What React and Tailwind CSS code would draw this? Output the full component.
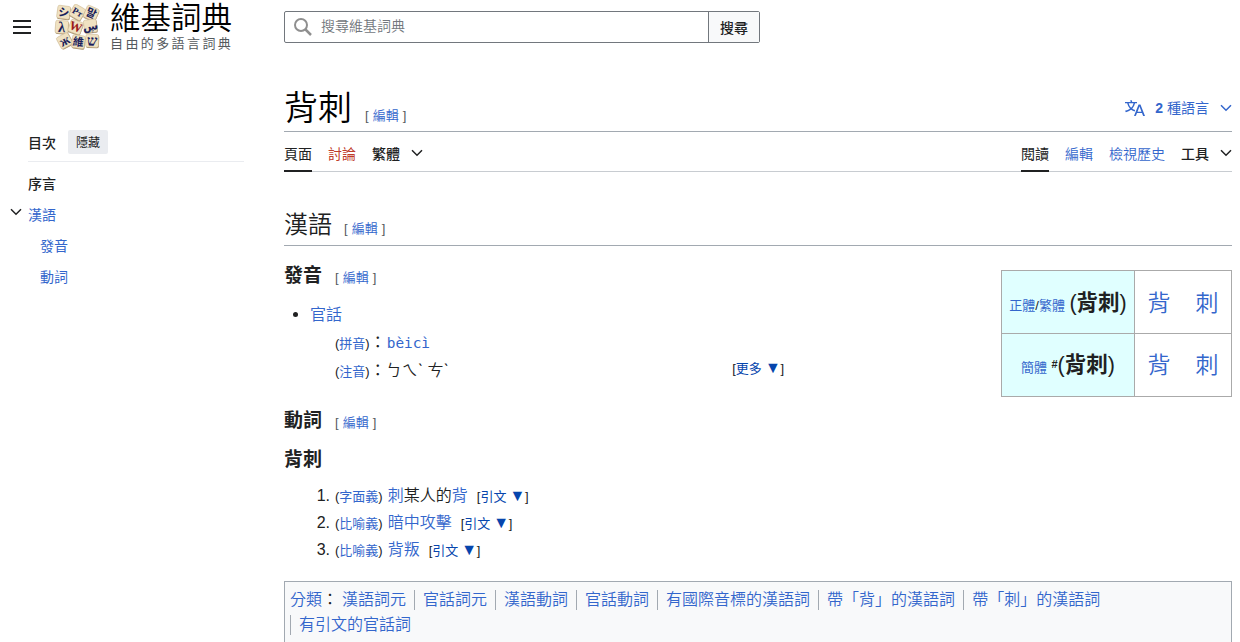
const tiles = [
  { x: 11, y: 9, r: 8, t: "シ", s: 12 },
  { x: 26, y: 9, r: 30, t: "Рт", s: 10 },
  { x: 41, y: 10, r: 24, t: "말", s: 12 },
  { x: 9, y: 25, r: 4, t: "λ", s: 16 },
  { x: 24, y: 25, r: 20, t: "W", s: 14, red: true },
  { x: 40, y: 24, r: -6, t: "ڛ", s: 12 },
  { x: 12, y: 40, r: -28, t: "ж", s: 15 },
  { x: 27, y: 41, r: 8, t: "維", s: 12 },
  { x: 42, y: 40, r: 2, t: "ש", s: 16 },
];

const categories = [
  "漢語詞元",
  "官話詞元",
  "漢語動詞",
  "官話動詞",
  "有國際音標的漢語詞",
  "帶「背」的漢語詞",
  "帶「刺」的漢語詞",
  "有引文的官話詞",
];

function Link({ children, className = "" }) {
  return (
    <a href="#" className={`text-[#3366cc] ${className}`}>
      {children}
    </a>
  );
}

function Chevron({ className = "" }) {
  return (
    <svg viewBox="0 0 12 8" className={`h-2 w-3 shrink-0 ${className}`} fill="none" stroke="currentColor" strokeWidth="1.5">
      <path d="M1 1.2l5 5 5-5" />
    </svg>
  );
}

function Logo() {
  return (
    <svg viewBox="0 0 51 50" className="mt-px h-[46px] w-[50px] shrink-0">
      {tiles.map((tile) => (
        <g key={tile.t} transform={`translate(${tile.x} ${tile.y}) rotate(${tile.r})`}>
          <rect x="-6.5" y="-6" width="14" height="14" rx="2" fill="#a58f6c" />
          <rect x="-7" y="-7" width="14" height="14" rx="2" fill="#f0e2c2" stroke="#cbb68f" strokeWidth="0.6" />
          <text
            y="0"
            fontSize={tile.s}
            fontWeight="700"
            textAnchor="middle"
            dominantBaseline="central"
            fill={tile.red ? "#9c1c1c" : "#1b1f5c"}
            className="font-['Liberation_Serif','DejaVu_Sans','Noto_Sans_CJK_TC',serif]"
          >
            {tile.t}
          </text>
        </g>
      ))}
    </svg>
  );
}

function Edit({ className = "" }) {
  return (
    <span className={`text-[13px] font-[350] text-[#54595d] ${className}`}>
      [<Link className="mx-1">編輯</Link>]
    </span>
  );
}

function Toggle({ label, className = "" }) {
  return (
    <span className={`flex items-baseline text-[13px] text-[#202122] ${className}`}>
      [
      <a href="#" className="flex items-baseline text-[#0645ad]">
        {label}
        <span className="ml-[3px] w-[15.5px] text-[16px]">▼</span>
      </a>
      ]
    </span>
  );
}

function Header() {
  return (
    <header className="flex h-[60px] items-start">
      <button className="ml-[13px] mt-5 flex h-[14px] w-[18px] flex-col justify-between">
        <span className="h-0.5 w-full bg-[#202122]" />
        <span className="h-0.5 w-full bg-[#202122]" />
        <span className="h-0.5 w-full bg-[#202122]" />
      </button>
      <a href="#" className="ml-[21px] mt-[3px] flex w-[232px]">
        <Logo />
        <span className="ml-2 flex flex-col">
          <span className="h-[31px] text-[30.5px] leading-[30px] font-[350] text-black">維基詞典</span>
          <span className="text-[13px] leading-[19px] tracking-[2.4px] text-[#54595d]">自由的多語言詞典</span>
        </span>
      </a>
      <form className="mt-[11px] flex h-8 w-[476px] rounded-[2px] border border-[#72777d]">
        <div className="flex flex-1 items-center pl-2">
          <svg viewBox="0 0 20 20" className="h-5 w-5" fill="none" stroke="#8f8f8f" strokeWidth="2">
            <circle cx="8" cy="8" r="6" />
            <path d="M12.5 12.5l5.5 5.5" strokeWidth="2.5" />
          </svg>
          <span className="ml-2 pb-0.5 text-[14px] font-[350] text-[#72777d]">搜尋維基詞典</span>
        </div>
        <button type="button" className="w-[51px] border-l border-[#72777d] bg-[#f8f9fa] pt-0.5 text-[14px] font-medium text-[#202122]">
          搜尋
        </button>
      </form>
    </header>
  );
}

function Sidebar() {
  return (
    <aside className="w-[284px] shrink-0 pt-[64px] text-[14px]">
      <div className="ml-7 flex h-[38px] w-[216px] items-center border-b border-[#eaecf0]">
        <span className="pt-px font-medium">目次</span>
        <button className="-mt-px ml-3 h-6 w-10 rounded-[2px] bg-[#eaecf0] pt-px text-[12px]">隱藏</button>
      </div>
      <ul className="mt-[7px] leading-[31px]">
        <li className="pl-7 font-medium">序言</li>
        <li className="flex items-center pl-[10px]">
          <Chevron className="mr-[6px] mb-2" />
          <Link>漢語</Link>
        </li>
        <li className="pl-10">
          <Link>發音</Link>
        </li>
        <li className="pl-10">
          <Link>動詞</Link>
        </li>
      </ul>
    </aside>
  );
}

function Tabs() {
  return (
    <nav className="flex h-10 border-b border-[#c8ccd1] text-[14px]">
      <a href="#" className="-mb-px flex items-center border-b-2 border-[#202122] pt-1.5">頁面</a>
      <a href="#" className="ml-4 flex items-center pt-[5px] text-[#bf3c2c]">討論</a>
      <button className="ml-4 flex items-center pt-[5px] font-medium">
        繁體
        <Chevron className="mb-0.5 ml-[11px]" />
      </button>
      <a href="#" className="-mb-px ml-auto flex items-center border-b-2 border-[#202122] pt-1.5">閱讀</a>
      <Link className="ml-4 flex items-center pt-[5px] font-[350]">編輯</Link>
      <Link className="ml-4 flex items-center pt-[5px] font-[350]">檢視歷史</Link>
      <button className="ml-4 flex items-center pt-[5px] font-medium">
        工具
        <Chevron className="mb-0.5 ml-[11px]" />
      </button>
    </nav>
  );
}

function FormsTable() {
  return (
    <table className="mt-6 h-[127px] w-[231px] table-fixed border-collapse text-center whitespace-nowrap">
      <tbody>
        <tr className="h-[63px]">
          <th className="w-[133px] border border-[#aaaaaa] bg-[#e0ffff] p-0 pt-0.5 font-normal">
            <span className="text-[13px]"><Link>正體</Link>/<Link>繁體</Link></span>{" "}
            <span className="text-[21.5px]">(<b>背刺</b>)</span>
          </th>
          <td className="border border-[#aaaaaa] p-0 pt-0.5 text-[23px] font-[350]">
            <Link>背</Link>
            <Link className="ml-[25px]">刺</Link>
          </td>
        </tr>
        <tr className="h-[63px]">
          <th className="border border-[#aaaaaa] bg-[#e0ffff] p-0 font-normal">
            <span className="text-[13px]"><Link>簡體</Link></span>{" "}
            <span className="relative -top-1 text-[11px] font-bold">#</span>
            <span className="text-[21.5px]">(<b>背刺</b>)</span>
          </th>
          <td className="border border-[#aaaaaa] p-0 text-[23px] font-[350]">
            <Link>背</Link>
            <Link className="ml-[25px]">刺</Link>
          </td>
        </tr>
      </tbody>
    </table>
  );
}

function Definition({ number, label, children }) {
  return (
    <li className="flex h-[27px] items-baseline leading-[27px]">
      <span className="w-[46px] text-right">{number}.</span>
      <span className="ml-[5px] text-[13px]">(<Link>{label}</Link>)</span>
      <span className="ml-[5px] font-[350]">{children}</span>
      <Toggle label="引文" className="ml-[9px]" />
    </li>
  );
}

export default function App() {
  return (
    <div className="h-[642px] w-[1240px] overflow-hidden bg-white font-['Liberation_Sans','Noto_Sans_CJK_TC',sans-serif] text-[#202122]">
      <Header />
      <div className="flex">
        <Sidebar />
        <main className="w-[948px]">
          <div className="flex h-[72px] items-center border-b border-[#a2a9b1] pt-[26px]">
            <h1 className="flex items-baseline text-[34px] font-[350] text-black">
              背刺
              <Edit className="ml-[13px]" />
            </h1>
            <button className="ml-auto flex items-center pb-px text-[14px] text-[#3366cc]">
              <svg viewBox="0 0 20 20" className="h-5 w-5" fill="currentColor">
                <path d="M20 18h-1.44a.6.6 0 0 1-.4-.12.8.8 0 0 1-.23-.31L17 15h-5l-1 2.54a.8.8 0 0 1-.22.3.6.6 0 0 1-.4.14H9l4.55-11.47h1.89zm-3.53-4.31L14.89 9.5a12 12 0 0 1-.39-1.24q-.09.37-.19.69l-.19.56-1.58 4.19zm-6.3-1.58a13.4 13.4 0 0 1-2.91-1.41 11.46 11.46 0 0 0 2.81-5.37H12V4H7.31a4 4 0 0 0-.2-.56C6.87 2.79 6.6 2 6.6 2l-1.47.5s.4.89.6 1.5H0v1.33h2.15A11.23 11.23 0 0 0 5 10.7a17.2 17.2 0 0 1-5 2.1q.56.82.87 1.38a23.3 23.3 0 0 0 5.22-2.51 15.6 15.6 0 0 0 3.56 1.77zM3.63 5.33h4.91a8.1 8.1 0 0 1-2.45 4.45 9.1 9.1 0 0 1-2.46-4.45" />
              </svg>
              <span className="ml-[10px]"><b>2</b> 種語言</span>
              <Chevron className="ml-[11px]" />
            </button>
          </div>
          <Tabs />
          <h2 className="flex h-[74px] items-center border-b border-[#a2a9b1] pt-8">
            <span className="flex items-baseline text-[24px] font-[350]">
              漢語
              <Edit className="ml-3" />
            </span>
          </h2>
          <div className="flex justify-between">
            <section className="w-[520px]">
              <h3 className="flex h-[54px] items-center pt-1.5">
                <span className="flex items-baseline text-[19px] font-bold">
                  發音
                  <Edit className="ml-[13px]" />
                </span>
              </h3>
              <div className="flex h-[29px] items-center">
                <span className="mr-3 ml-[9px] h-[5px] w-[5px] rounded-full bg-[#202122]" />
                <Link className="font-[350]">官話</Link>
              </div>
              <div className="flex h-7 items-baseline pl-[51px] leading-7">
                <span className="text-[13px]">(<Link>拼音</Link>)</span>：
                <Link className="ml-px font-['DejaVu_Sans_Mono',monospace] text-[14.4px]">bèicì</Link>
              </div>
              <div className="flex h-7 items-baseline pl-[51px] leading-7">
                <span className="text-[13px]">(<Link>注音</Link>)</span>：
                <span className="font-[350]">ㄅㄟˋ ㄘˋ</span>
                <Toggle label="更多" className="mr-5 ml-auto self-start leading-[22px]" />
              </div>
            </section>
            <FormsTable />
          </div>
          <h3 className="-mt-3 flex h-14 items-center pt-4">
            <span className="flex items-baseline text-[19px] font-bold">
              動詞
              <Edit className="ml-[13px]" />
            </span>
          </h3>
          <p className="mt-px h-9 text-[19px] leading-9 font-bold">背刺</p>
          <ol className="mt-1">
            <Definition number={1} label="字面義">
              <Link>刺</Link>某人的<Link>背</Link>
            </Definition>
            <Definition number={2} label="比喻義">
              <Link>暗中攻擊</Link>
            </Definition>
            <Definition number={3} label="比喻義">
              <Link>背叛</Link>
            </Definition>
          </ol>
          <footer className="mt-[18px] h-[90px] border border-[#a2a9b1] bg-[#f8f9fa] px-[5px] pt-[5px] font-[350]">
            <ul className="flex flex-wrap">
              <li className="mr-1 h-[25px] leading-[25px]">
                <Link>分類</Link>：
              </li>
              {categories.map((name, i) => (
                <li key={name} className={i === 0 ? "h-[25px] pr-2 leading-[25px]" : "my-[2.5px] h-5 border-l border-[#a2a9b1] px-2 leading-5"}>
                  <Link>{name}</Link>
                </li>
              ))}
            </ul>
          </footer>
        </main>
      </div>
    </div>
  );
}
